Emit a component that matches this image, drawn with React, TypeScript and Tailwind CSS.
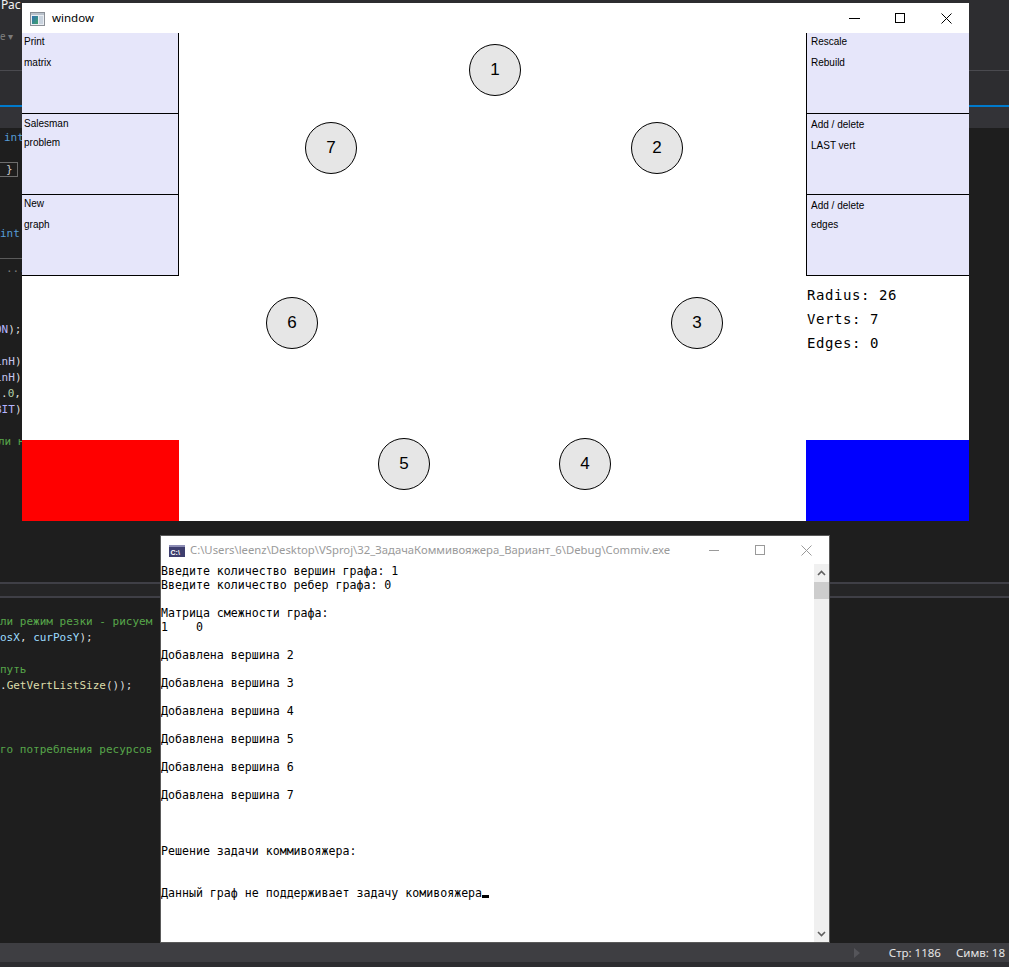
import React from "react";

function CodeLine({ children }: { children?: React.ReactNode }) {
  return <div className="h-[16px] leading-[16px] whitespace-pre">{children}</div>;
}

type PanelData = { l1: string; l2: string; pt: string; gap: string };

const leftPanels: PanelData[] = [
  { l1: "Print", l2: "matrix", pt: "pt-[3px]", gap: "mt-[10px]" },
  { l1: "Salesman", l2: "problem", pt: "pt-[4px]", gap: "mt-[8px]" },
  { l1: "New", l2: "graph", pt: "pt-[3px]", gap: "mt-[10px]" },
];

const rightPanels: PanelData[] = [
  { l1: "Rescale", l2: "Rebuild", pt: "pt-[3px]", gap: "mt-[10px]" },
  { l1: "Add / delete", l2: "LAST vert", pt: "pt-[5px]", gap: "mt-[10px]" },
  { l1: "Add / delete", l2: "edges", pt: "pt-[5px]", gap: "mt-[8px]" },
];

const nodes = [
  { n: 1, x: 495, y: 70 },
  { n: 2, x: 657, y: 148 },
  { n: 3, x: 697, y: 323 },
  { n: 4, x: 585, y: 464 },
  { n: 5, x: 404, y: 464 },
  { n: 6, x: 292, y: 323 },
  { n: 7, x: 331, y: 148 },
];

const consoleLines = [
  "Введите количество вершин графа: 1",
  "Введите количество ребер графа: 0",
  "",
  "Матрица смежности графа:",
  "1    0",
  "",
  "Добавлена вершина 2",
  "",
  "Добавлена вершина 3",
  "",
  "Добавлена вершина 4",
  "",
  "Добавлена вершина 5",
  "",
  "Добавлена вершина 6",
  "",
  "Добавлена вершина 7",
  "",
  "",
  "",
  "Решение задачи коммивояжера:",
  "",
  "",
];

function GlutIcon() {
  return (
    <svg width="15" height="14" viewBox="0 0 15 14">
      <defs>
        <linearGradient id="gi" x1="0" y1="0" x2="1" y2="1">
          <stop offset="0" stopColor="#2f6fb3" />
          <stop offset="1" stopColor="#3fa36b" />
        </linearGradient>
      </defs>
      <rect x="0.5" y="0.5" width="14" height="13" fill="#e9edf2" stroke="#8a8f96" />
      <rect x="1" y="1" width="13" height="2" fill="#b9c2cc" />
      <rect x="2" y="4" width="6" height="8" fill="url(#gi)" />
      <rect x="9" y="4" width="4" height="8" fill="#c9d3de" />
    </svg>
  );
}

function ConsoleIcon() {
  return (
    <svg width="16" height="12" viewBox="0 0 16 12">
      <rect x="0" y="0" width="16" height="12" fill="#3e3e6e" />
      <rect x="0" y="0" width="16" height="2" fill="#8d8db5" />
      <text x="1.5" y="10" fontSize="7" fill="#ffffff" fontFamily="Liberation Sans, sans-serif" fontWeight="bold">
        C:\
      </text>
    </svg>
  );
}

function Panel({ p, side }: { p: PanelData; side: "l" | "r" }) {
  return (
    <div
      className={
        side === "l"
          ? "h-[81px] w-[157px] border-r border-b border-black bg-[#e6e6fa] pl-[2px] " + p.pt
          : "h-[81px] w-full border-l border-b border-black bg-[#e6e6fa] pl-[4px] " + p.pt
      }
    >
      <div className="leading-[11px] text-[10px] text-black">{p.l1}</div>
      <div className={"leading-[11px] text-[10px] text-black " + p.gap}>{p.l2}</div>
    </div>
  );
}

function Chevron({ up }: { up: boolean }) {
  return (
    <svg width="9" height="6" viewBox="0 0 9 6">
      {up ? (
        <polyline points="1,5 4.5,1.5 8,5" fill="none" stroke="#606060" strokeWidth="1.6" />
      ) : (
        <polyline points="1,1 4.5,4.5 8,1" fill="none" stroke="#606060" strokeWidth="1.6" />
      )}
    </svg>
  );
}

export default function App() {
  return (
    <div className="relative w-[1009px] h-[967px] overflow-hidden bg-[#1e1e1e] font-['Noto_Sans',sans-serif]">
      {/* Visual Studio background */}
      <div className="flex flex-col h-full">
        <div className="h-[105px] bg-[#2d2d30] flex flex-col">
          <div className="h-[30px] text-[12px] leading-[12px] text-[#f1f1f1] -mt-[1px] pl-[1px]">Рас</div>
          <div className="h-[41px] text-[10px] leading-[12px] text-[#7a7a7a] pt-[1px]">е ▾</div>
          <div className="h-px bg-[#4a4a4f]" />
          <div className="flex-1 bg-[#2d2d30]" />
        </div>
        <div className="h-[2px] bg-[#007acc]" />
        <div className="h-[21px] bg-[#333337]" />
        {/* upper editor */}
        <div className="h-[454px] pt-[2px] overflow-hidden font-['DejaVu_Sans_Mono',monospace] text-[11px] text-[#dcdcdc]">
          <CodeLine>
            <span className="ml-[4px] text-[#569cd6]">int</span>
          </CodeLine>
          <CodeLine />
          <CodeLine>
            <span className="inline-block -ml-[6px] w-[24px] h-[15px] border border-[#6d6d6d] pl-[11px] leading-[13px] text-[#c8c8c8] align-top">
              {"}"}
            </span>
          </CodeLine>
          <CodeLine />
          <CodeLine />
          <CodeLine />
          <CodeLine>
            <span className="text-[#569cd6]">int</span>
          </CodeLine>
          <CodeLine />
          <div className="h-[16px] w-[24px] border-t border-[#5a5a5a] leading-[20px] text-[#7a7a7a] pl-[6px]">...</div>
          <CodeLine />
          <CodeLine />
          <CodeLine />
          <CodeLine>
            <span className="-ml-[5px] text-[#b4b4ff]">ON</span>);
          </CodeLine>
          <CodeLine />
          <CodeLine>
            <span className="-ml-[5px] text-[#c4c4ee]">inH</span>)
          </CodeLine>
          <CodeLine>
            <span className="-ml-[5px] text-[#c4c4ee]">inH</span>)
          </CodeLine>
          <CodeLine>
            <span className="ml-[1px]">
              .<span className="text-[#b5cea8]">0</span>,
            </span>
          </CodeLine>
          <CodeLine>
            <span className="-ml-[5px] text-[#b4b4ff]">BIT</span>)
          </CodeLine>
          <CodeLine />
          <CodeLine>
            <span className="-ml-[2px] text-[#57a64a]">ли н</span>
          </CodeLine>
        </div>
        {/* splitter */}
        <div className="h-[2px] bg-[#3f3f46]" />
        <div className="h-[12px] bg-[#252526]" />
        <div className="h-[2px] bg-[#3f3f46]" />
        {/* lower editor */}
        <div className="flex-1 pt-[16px] overflow-hidden font-['DejaVu_Sans_Mono',monospace] text-[11px] text-[#dcdcdc]">
          <CodeLine>
            <span className="text-[#57a64a]">ли режим резки - рисуем</span>
          </CodeLine>
          <CodeLine>
            <span className="text-[#9cdcfe]">osX</span>, <span className="text-[#9cdcfe]">curPosY</span>);
          </CodeLine>
          <CodeLine />
          <CodeLine>
            <span className="text-[#57a64a]">путь</span>
          </CodeLine>
          <CodeLine>
            .<span className="text-[#dcdcaa]">GetVertListSize</span>());
          </CodeLine>
          <CodeLine />
          <CodeLine />
          <CodeLine />
          <CodeLine>
            <span className="text-[#57a64a]">го потребления ресурсов</span>
          </CodeLine>
        </div>
        {/* status bar */}
        <div className="h-[19px] bg-[#3e3e42] flex items-center justify-end pr-[4px] text-[11.5px] text-[#e6e6e6]">
          <svg width="6" height="10" viewBox="0 0 6 10" className="mr-[29px]">
            <polygon points="0,0 6,5 0,10" fill="#55555a" />
          </svg>
          <span className="mr-[15px]">Стр: 1186</span>
          <span>Симв: 18</span>
        </div>
        <div className="h-[5px] bg-[#2d2d30]" />
      </div>

      {/* GLUT window */}
      <div className="absolute left-[22px] top-[3px] w-[947px] h-[518px] bg-white flex flex-col">
        <div className="h-[30px] flex items-center">
          <div className="ml-[8px] mt-[1px]">
            <GlutIcon />
          </div>
          <div className="ml-[7px] text-[11.5px] leading-[16px] text-black">window</div>
          <div className="flex-1" />
          <div className="w-[46px] h-[30px] flex items-center justify-center">
            <div className="w-[11px] h-px bg-black" />
          </div>
          <div className="w-[46px] h-[30px] flex items-center justify-center">
            <div className="w-[10px] h-[10px] border border-black" />
          </div>
          <div className="w-[46px] h-[30px] flex items-center justify-center">
            <svg width="11" height="11" viewBox="0 0 11 11">
              <line x1="0.5" y1="0.5" x2="10.5" y2="10.5" stroke="#000" strokeWidth="1" />
              <line x1="10.5" y1="0.5" x2="0.5" y2="10.5" stroke="#000" strokeWidth="1" />
            </svg>
          </div>
        </div>
        <div className="relative h-[488px] flex font-['Liberation_Sans',Arial,sans-serif]">
          <div className="w-[157px] flex flex-col">
            {leftPanels.map((p, i) => (
              <Panel key={i} p={p} side="l" />
            ))}
            <div className="flex-1" />
            <div className="h-[81px] bg-[#ff0000]" />
          </div>
          <div className="w-[627px]" />
          <div className="w-[163px] flex flex-col">
            {rightPanels.map((p, i) => (
              <Panel key={i} p={p} side="r" />
            ))}
            <div className="mt-[7px] pl-[1px] font-['DejaVu_Sans_Mono',monospace] text-[14px] tracking-[0.57px] leading-[24px] text-black">
              <div>Radius: 26</div>
              <div>Verts: 7</div>
              <div>Edges: 0</div>
            </div>
            <div className="flex-1" />
            <div className="h-[81px] bg-[#0000ff]" />
          </div>
          {nodes.map((nd) => (
            <div
              key={nd.n}
              className="absolute w-[52px] h-[52px] rounded-full border border-black bg-[#e6e6e6] flex items-center justify-center text-[17px] text-black"
              style={{ left: nd.x - 22 - 26, top: nd.y - 33 - 26 }}
            >
              {nd.n}
            </div>
          ))}
        </div>
      </div>

      {/* Console window */}
      <div className="absolute left-[160px] top-[535px] w-[670px] h-[408px] border border-[#5a5a5a] bg-white flex flex-col">
        <div className="h-[28px] flex items-center">
          <div className="ml-[8px] mt-[1px] flex">
            <ConsoleIcon />
          </div>
          <div className="ml-[5px] text-[11.3px] leading-[16px] text-[#9a9a9a] whitespace-nowrap">
            C:\Users\leenz\Desktop\VSproj\32_ЗадачаКоммивояжера_Вариант_6\Debug\Commiv.exe
          </div>
          <div className="flex-1" />
          <div className="w-[46px] h-[28px] flex items-center justify-center">
            <div className="w-[10px] h-px bg-[#9a9a9a]" />
          </div>
          <div className="w-[46px] h-[28px] flex items-center justify-center">
            <div className="w-[10px] h-[10px] border border-[#9a9a9a]" />
          </div>
          <div className="w-[46px] h-[28px] flex items-center justify-center">
            <svg width="11" height="11" viewBox="0 0 11 11">
              <line x1="0.5" y1="0.5" x2="10.5" y2="10.5" stroke="#9a9a9a" strokeWidth="1" />
              <line x1="10.5" y1="0.5" x2="0.5" y2="10.5" stroke="#9a9a9a" strokeWidth="1" />
            </svg>
          </div>
        </div>
        <div className="flex-1 flex min-h-0">
          <div className="flex-1 overflow-hidden font-['DejaVu_Sans_Mono',monospace] text-[11.6px] leading-[14px] text-black whitespace-pre">
            {consoleLines.map((l, i) => (
              <div key={i} className="h-[14px]">
                {l}
              </div>
            ))}
            <div className="h-[14px]">
              Данный граф не поддерживает задачу комивояжера
              <span className="inline-block w-[7px] h-[3px] bg-black align-baseline -mb-[1px]" />
            </div>
          </div>
          <div className="w-[15px] bg-[#f0f0f0] flex flex-col">
            <div className="h-[17px] flex items-center justify-center">
              <Chevron up={true} />
            </div>
            <div className="h-[17px] mt-[1px] bg-[#cdcdcd]" />
            <div className="flex-1" />
            <div className="h-[17px] flex items-center justify-center">
              <Chevron up={false} />
            </div>
          </div>
        </div>
      </div>
    </div>
  );
}
